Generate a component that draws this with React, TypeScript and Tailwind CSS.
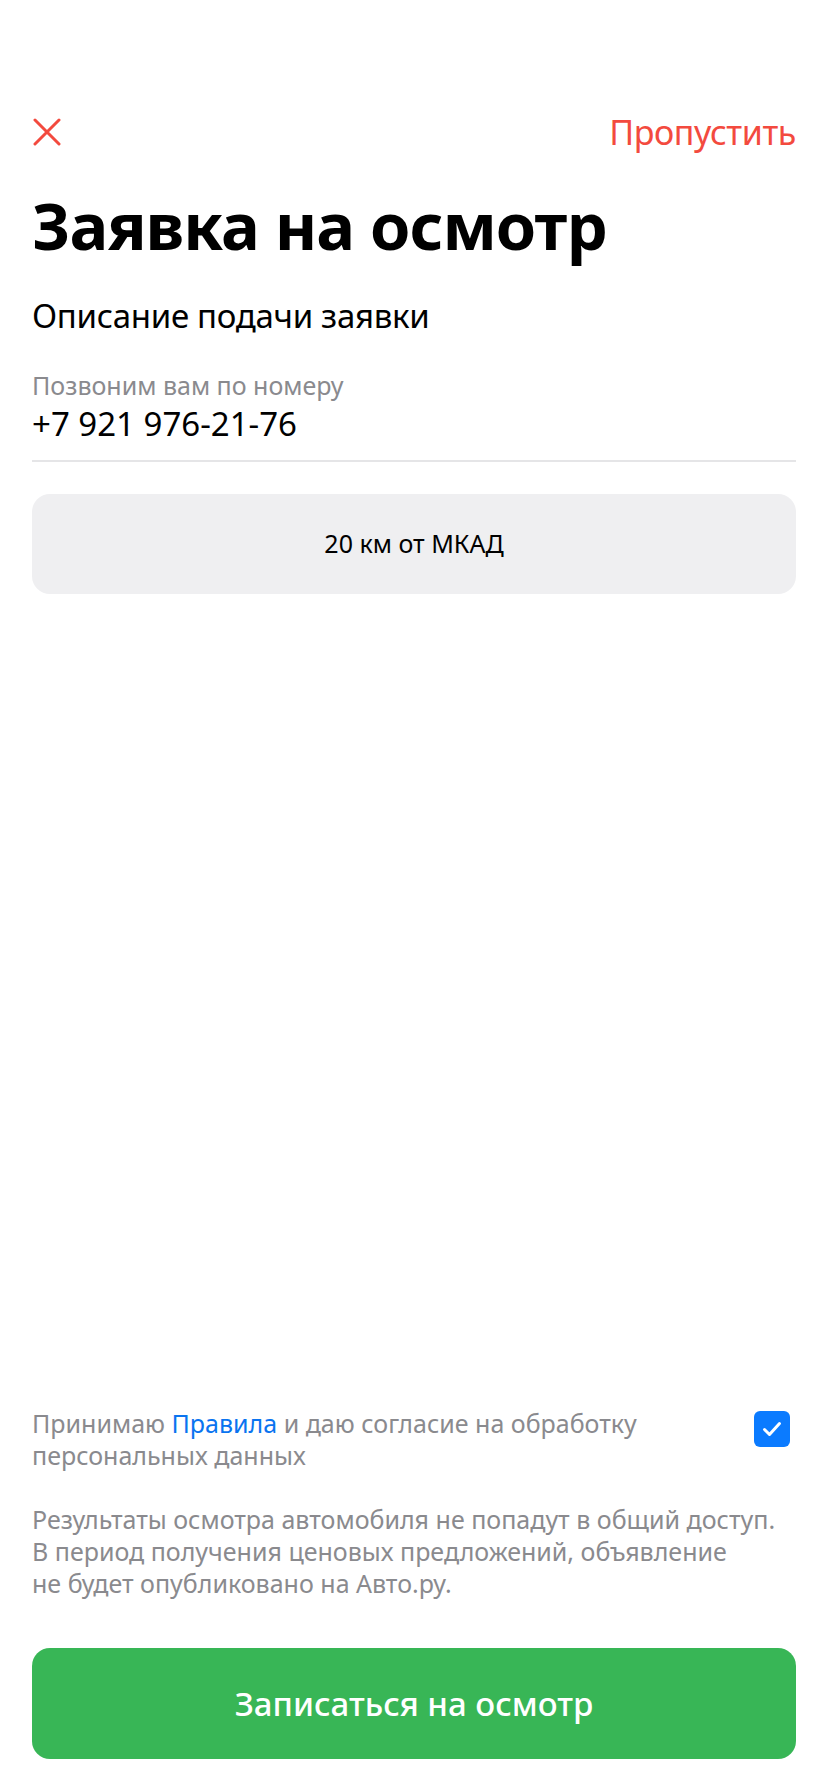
import { useState } from 'react';

const font = { fontFamily: '"Noto Sans", "Open Sans", sans-serif' };

export default function App() {
  const [agreed, setAgreed] = useState(true);

  return (
    <div className="min-h-[1792px] flex flex-col bg-white text-black" style={font}>
      {/* header */}
      <div className="mt-[104px] h-14 px-8 flex items-center justify-between">
        <button className="w-[30px] h-[30px] flex items-center justify-center">
          <svg width="28" height="28" viewBox="0 0 28 28" fill="none">
            <path d="M2 2L26 26M26 2L2 26" stroke="#f34a3e" strokeWidth="3" strokeLinecap="round" />
          </svg>
        </button>
        <button className="text-[34px] text-[#f34a3e] tracking-[-0.4px]">Пропустить</button>
      </div>

      <h1 className="mt-[25px] px-8 text-[65px] leading-[80px] font-bold tracking-[-1px]">Заявка на осмотр</h1>

      <p className="mt-[31px] px-8 text-[33px] leading-[40px] tracking-[-0.3px]">Описание подачи заявки</p>

      <div className="mt-[33px] mx-8 border-b-2 border-[#e5e5e7] pb-[15px]">
        <div className="text-[25px] leading-[32px] text-[#8a8a8e]">Позвоним вам по номеру</div>
        <div className="text-[33px] leading-[42px] mt-[2px]">+7 921 976-21-76</div>
      </div>

      <button className="mt-[32px] mx-8 h-[100px] rounded-[18px] bg-[#efeff1] text-[25px] text-black">
        20 км от МКАД
      </button>

      <div className="flex-1" />

      {/* bottom */}
      <div className="px-8 flex items-start gap-6">
        <p className="flex-1 text-[25px] leading-[32px] text-[#8a8a8e]">
          Принимаю <span className="text-[#0a74f0]">Правила</span> и даю согласие на обработку
          <br />
          персональных данных
        </p>
        <button
          onClick={() => setAgreed(!agreed)}
          className="mt-[4px] mr-[6px] w-9 h-9 rounded-[6px] bg-[#0b7bff] flex items-center justify-center shrink-0"
        >
          {agreed && (
            <svg width="20" height="16" viewBox="0 0 20 16" fill="none">
              <path d="M2.5 8.5L7.5 13.5L17.5 2.5" stroke="white" strokeWidth="3" strokeLinecap="round" strokeLinejoin="round" />
            </svg>
          )}
        </button>
      </div>

      <p className="mt-[32px] px-8 text-[25px] leading-[32px] text-[#8a8a8e] whitespace-nowrap">
        Результаты осмотра автомобиля не попадут в общий доступ.
        <br />
        В период получения ценовых предложений, объявление
        <br />
        не будет опубликовано на Авто.ру.
      </p>

      <button className="mt-[49px] mb-[33px] mx-8 h-[111px] rounded-[18px] bg-[#38b656] text-white text-[33px] font-medium">
        Записаться на осмотр
      </button>
    </div>
  );
}
